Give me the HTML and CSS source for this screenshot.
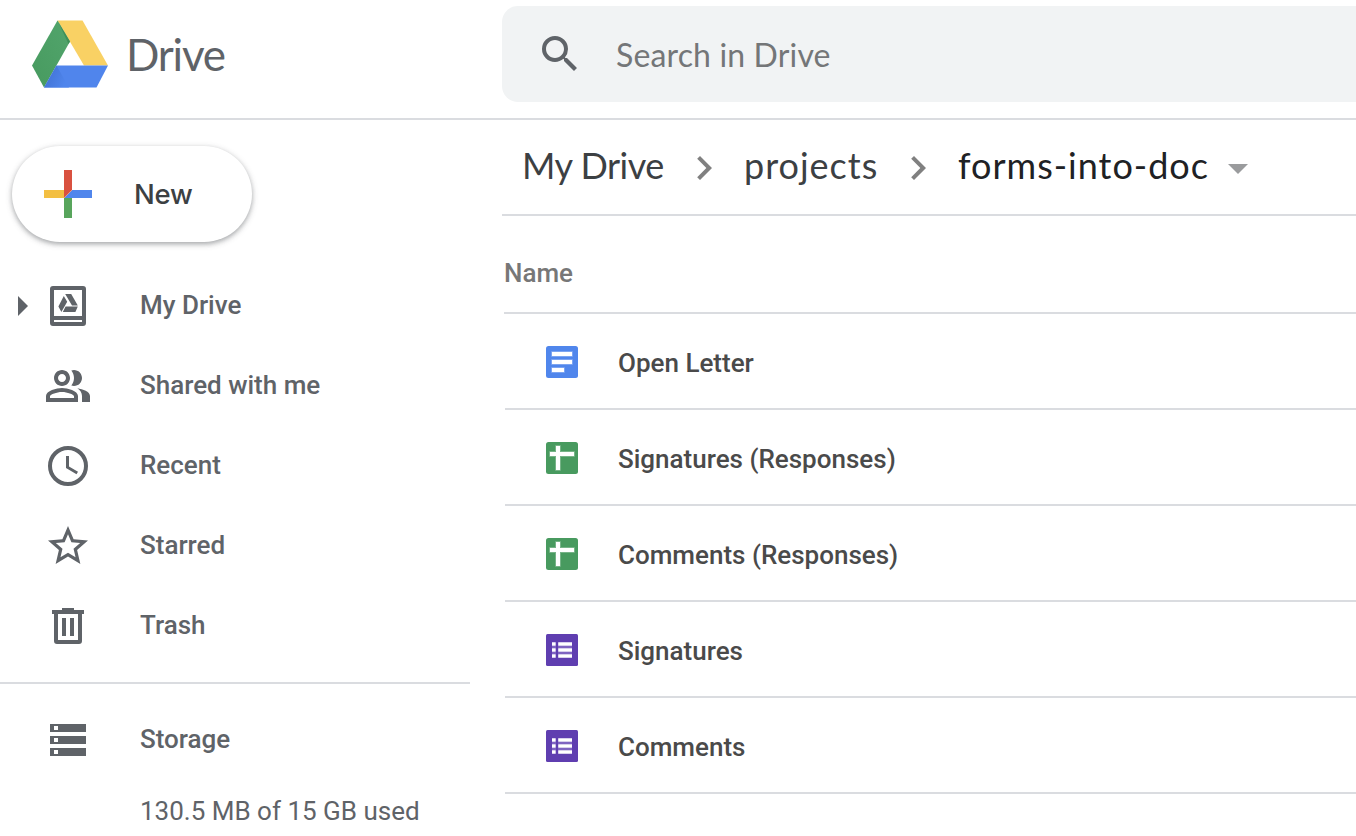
FILE: index.html
```html
<!DOCTYPE html>
<html lang="en">
<head>
<meta charset="utf-8">
<title>forms-into-doc - Drive</title>
<link rel="stylesheet" href="styles.css">
</head>
<body>
<header class="topbar">
  <div class="brand">
    <svg class="brand-logo" viewBox="0 0 76 68">
      <defs>
        <linearGradient id="g1" x1="0" y1="1" x2="1" y2="0"><stop offset="0" stop-color="#479a5f"/><stop offset="1" stop-color="#52a56c"/></linearGradient>
        <linearGradient id="g2" x1="0" y1="0" x2="1" y2="0.4"><stop offset="0" stop-color="#3f6fd0"/><stop offset="1" stop-color="#4f85ec"/></linearGradient>
      </defs>
      <path fill="#f9d164" d="M25.500 .5h25L76 45.500H52z"/>
      <path fill="url(#g1)" d="M25.500 .5L38 21.500 12 67.500 0 45.500z"/>
      <path fill="#3f8f58" d="M25.500 .5L38 21.500l-1.500 2.500z"/>
      <path fill="#5085ec" d="M24.500 45.500H76L64.500 67.500H12z"/>
      <path fill="url(#g2)" d="M24.500 45.500L37 67.500H12z"/>
    </svg>
    <span class="brand-name">Drive</span>
  </div>
  <div class="search">
    <svg class="icon" viewBox="0 0 24 24"><path d="M15.500 14h-.79l-.28-.27A6.470 6.470 0 0 0 16 9.500 6.500 6.500 0 1 0 9.500 16c1.610 0 3.090-.59 4.230-1.570l.27.28v.79l5 4.990L20.490 19l-4.990-5zm-6 0C7.010 14 5 11.990 5 9.500S7.010 5 9.500 5 14 7.010 14 9.500 11.990 14 9.500 14z"/></svg>
    <span class="search-text">Search in Drive</span>
  </div>
</header>
<div class="page">
  <aside class="sidebar">
    <button class="new-button">
      <svg class="plus" viewBox="0 0 48 48">
        <path fill="#f3bf42" d="M0 20h20v8H0z"/>
        <path fill="#58a55c" d="M20 28h8v20h-8z"/>
        <path fill="#5086ec" d="M28 20h20v8H20z"/>
        <path fill="#d95140" d="M20 0h8v20l-8 8z"/>
        <path stroke="#e8a08a" stroke-width=".7" d="M28 20l-8 8"/>
      </svg>
      <span class="new-label">New</span>
    </button>
    <nav class="nav">
      <a class="nav-item">
        <svg class="expander" viewBox="0 0 10 20"><path d="M0 0l10 10L0 20z"/></svg>
        <svg class="icon" viewBox="0 0 24 24"><path fill-rule="evenodd" d="M4.500 2h15A1.500 1.500 0 0 1 21 3.500v17a1.500 1.500 0 0 1-1.500 1.500h-15A1.500 1.500 0 0 1 3 20.500v-17A1.500 1.500 0 0 1 4.500 2zM5 4v13h14V4zM5 19v1h14v-1z"/><path d="M9.900 7l1.700 2.900L8.700 15l-1.500-2.700zM10.600 6h3l3.300 5.700h-2.900zM10.800 12.300h6.100L15.700 15H9.400z"/></svg>
        <span class="nav-label">My Drive</span>
      </a>
      <a class="nav-item">
        <svg class="icon" viewBox="0 0 24 24"><path d="M16.670 13.130C18.040 14.060 19 15.320 19 17v3h4v-3c0-2.180-3.570-3.470-6.330-3.870zM15 12c2.210 0 4-1.790 4-4s-1.790-4-4-4c-.47 0-.91.1-1.330.24C14.500 5.270 15 6.580 15 8s-.5 2.730-1.330 3.760c.42.14.86.24 1.330.24zM9 12c2.210 0 4-1.790 4-4s-1.790-4-4-4-4 1.790-4 4 1.790 4 4 4zm0-6c1.100 0 2 .9 2 2s-.9 2-2 2-2-.9-2-2 .9-2 2-2zM9 13c-2.670 0-8 1.340-8 4v3h16v-3c0-2.660-5.330-4-8-4zm6 5H3v-.99C3.200 16.290 6.300 15 9 15s5.800 1.290 6 2v1z"/></svg>
        <span class="nav-label">Shared with me</span>
      </a>
      <a class="nav-item">
        <svg class="icon" viewBox="0 0 24 24"><circle class="ring" cx="12" cy="12" r="9"/><path d="M12.500 7H11v6l5.250 3.150.75-1.230-4.500-2.670z"/></svg>
        <span class="nav-label">Recent</span>
      </a>
      <a class="nav-item">
        <svg class="icon" viewBox="0 0 24 24"><path d="M22 9.240l-7.190-.62L12 2 9.190 8.630 2 9.240l5.460 4.730L5.820 21 12 17.270 18.180 21l-1.630-7.030L22 9.240zM12 15.400l-3.760 2.270 1-4.280-3.320-2.880 4.380-.38L12 6.100l1.710 4.040 4.380.38-3.320 2.880 1 4.280L12 15.400z"/></svg>
        <span class="nav-label">Starred</span>
      </a>
      <a class="nav-item">
        <svg class="icon" viewBox="0 0 24 24"><path fill-rule="evenodd" d="M9 3h6v1h5v2h-1v13.500a1.500 1.500 0 0 1-1.500 1.500h-11A1.500 1.500 0 0 1 5 19.500V6H4V4h5zM7 6v13h10V6zM9 8h2v9H9zM13 8h2v9h-2z"/></svg>
        <span class="nav-label">Trash</span>
      </a>
    </nav>
    <section class="storage">
      <a class="nav-item">
        <svg class="icon" viewBox="0 0 24 24"><path fill-rule="evenodd" d="M3 4h18v4H3zM5 5v2h2V5zM3 10h18v4H3zM5 11v2h2v-2zM3 16h18v4H3zM5 17v2h2v-2z"/></svg>
        <span class="nav-label">Storage</span>
      </a>
      <div class="quota">130.5 MB of 15 GB used</div>
    </section>
  </aside>
  <main class="content">
    <div class="breadcrumbs">
      <span class="crumb crumb-root">My Drive</span>
      <svg class="chevron" viewBox="0 0 24 24"><path d="M10 6L8.590 7.410 13.170 12l-4.580 4.590L10 18l6-6z"/></svg>
      <span class="crumb crumb-parent">projects</span>
      <svg class="chevron" viewBox="0 0 24 24"><path d="M10 6L8.590 7.410 13.170 12l-4.580 4.590L10 18l6-6z"/></svg>
      <span class="crumb crumb-current">forms-into-doc</span>
      <svg class="caret" viewBox="0 0 20 10"><path d="M0 0h20L10 10z"/></svg>
    </div>
    <div class="list-head">Name</div>
    <div class="row">
      <svg class="file-icon" viewBox="0 0 32 32"><rect width="32" height="32" rx="2.500" fill="#5086ec"/><path class="glyph-edge" d="M6 6h20v4H6zM6 14h20v4H6zM6 22h12v4H6z"/><path class="glyph" d="M6 6h20v4H6zM6 14h20v4H6zM6 22h12v4H6z"/></svg>
      <span class="file-name">Open Letter</span>
    </div>
    <div class="row">
      <svg class="file-icon" viewBox="0 0 32 32"><rect width="32" height="32" rx="2.500" fill="#489a5f"/><path class="glyph-edge" d="M10 4h4v6h14v4H14v14h-4V14H4v-4h6z"/><path class="glyph" d="M10 4h4v6h14v4H14v14h-4V14H4v-4h6z"/></svg>
      <span class="file-name">Signatures (Responses)</span>
    </div>
    <div class="row">
      <svg class="file-icon" viewBox="0 0 32 32"><rect width="32" height="32" rx="2.500" fill="#489a5f"/><path class="glyph-edge" d="M10 4h4v6h14v4H14v14h-4V14H4v-4h6z"/><path class="glyph" d="M10 4h4v6h14v4H14v14h-4V14H4v-4h6z"/></svg>
      <span class="file-name">Comments (Responses)</span>
    </div>
    <div class="row">
      <svg class="file-icon" viewBox="0 0 32 32"><rect width="32" height="32" rx="1.500" fill="#5f3eb0"/><path fill="#7f64c1" d="M6 12h4v2H6zM12 12h14v2H12zM6 18h4v2H6zM12 18h14v2H12z"/><path class="glyph" d="M6 8.200h3.700v3.600H6zM12.200 8.200H26v3.600H12.200zM6 14.200h3.700v3.600H6zM12.200 14.200H26v3.600H12.200zM6 20.200h3.700v3.600H6zM12.200 20.200H26v3.600H12.200z"/></svg>
      <span class="file-name">Signatures</span>
    </div>
    <div class="row">
      <svg class="file-icon" viewBox="0 0 32 32"><rect width="32" height="32" rx="1.500" fill="#5f3eb0"/><path fill="#7f64c1" d="M6 12h4v2H6zM12 12h14v2H12zM6 18h4v2H6zM12 18h14v2H12z"/><path class="glyph" d="M6 8.200h3.700v3.600H6zM12.200 8.200H26v3.600H12.200zM6 14.200h3.700v3.600H6zM12.200 14.200H26v3.600H12.200zM6 20.200h3.700v3.600H6zM12.200 20.200H26v3.600H12.200z"/></svg>
      <span class="file-name">Comments</span>
    </div>
  </main>
</div>
</body>
</html>
```
FILE: styles.css
```css
* { box-sizing: border-box; }
body {
  margin: 0;
  height: 836px;
  overflow: hidden;
  background: #fff;
  color: #5f6368;
  font-family: Roboto, "Liberation Sans", sans-serif;
}
svg { display: block; flex: none; }
.icon { width: 48px; height: 48px; fill: #5f6368; }
.ring { fill: none; stroke: #5f6368; stroke-width: 2; }

.topbar {
  display: flex;
  height: 120px;
  border-bottom: 2px solid #dadce0;
}
.brand {
  display: flex;
  flex: none;
  width: 502px;
  padding: 20px 0 0 32px;
}
.brand-logo { width: 76px; height: 68px; }
.brand-name {
  margin: 6px 0 0 18px;
  font: 44px/56px Lato, sans-serif;
  letter-spacing: -1.2px;
}
.search {
  display: flex;
  flex: 1;
  height: 96px;
  margin-top: 6px;
  padding: 24px 0 0 34px;
  border-radius: 16px 0 0 16px;
  background: #f1f3f4;
}
.search-text {
  margin: 5px 0 0 32px;
  color: #747678;
  font: 32px/40px Lato, sans-serif;
  letter-spacing: .15px;
}

.page { display: flex; }
.sidebar { flex: none; width: 470px; margin-right: 32px; padding-top: 26px; }
.new-button {
  display: flex;
  align-items: center;
  width: 240px;
  height: 96px;
  margin: 0 0 24px 12px;
  padding: 0 0 0 32px;
  border: 0;
  border-radius: 48px;
  background: #fff;
  box-shadow: 0 2px 4px rgba(60,64,67,.32), 0 2px 6px 1px rgba(60,64,67,.16);
}
.plus { width: 48px; height: 48px; fill: none; }
.new-label {
  margin-left: 42px;
  color: #3c4043;
  font: 500 27.5px/40px Inter, sans-serif;
  letter-spacing: -.2px;
}
.nav { padding-bottom: 16px; border-bottom: 2px solid #dadce0; }
.nav-item {
  display: flex;
  align-items: center;
  height: 80px;
  padding-left: 44px;
}
.expander { width: 10px; height: 20px; margin: 0 16px 0 -26px; fill: #5f6368; }
.nav-label { margin: -2px 0 0 48px; font: 500 26px/32px Roboto, sans-serif; }
.storage { padding-top: 16px; }
.quota { padding: 15px 0 0 140px; font-size: 26px; line-height: 32px; }

.content { flex: 1; min-width: 0; }
.breadcrumbs {
  display: flex;
  align-items: center;
  height: 96px;
  padding-left: 20px;
  border-bottom: 2px solid #dadce0;
}
.crumb {
  margin-top: -5px;
  color: #3c4043;
  font: 36px/48px Lato, sans-serif;
  white-space: nowrap;
}
.crumb-root { width: 142px; letter-spacing: -.5px; }
.crumb-parent { width: 134px; letter-spacing: 1px; }
.crumb-current { width: 250px; color: #202124; letter-spacing: 1px; }
.chevron { width: 48px; height: 48px; margin: 2px 16px 0; fill: #808080; }
.caret { width: 20px; height: 10px; margin: 4px 0 0 20px; fill: #9a9b9d; }
.list-head {
  height: 98px;
  margin-left: 2px;
  padding-top: 41px;
  border-bottom: 2px solid #dadce0;
  color: #777;
  font: 500 26px/32px Roboto, sans-serif;
}
.row {
  display: flex;
  align-items: center;
  height: 96px;
  margin-left: 3px;
  padding-left: 41px;
  border-bottom: 2px solid #dadce0;
}
.file-icon { width: 32px; height: 32px; margin-top: 2px; }
.glyph { fill: #fff; }
.glyph-edge {
  fill: none;
  stroke: #fff;
  stroke-opacity: .25;
  stroke-width: 2;
  stroke-linejoin: round;
}
.file-name {
  margin: 4px 0 0 40px;
  color: #4a4a4a;
  font: 500 26px/32px Roboto, sans-serif;
}
```
